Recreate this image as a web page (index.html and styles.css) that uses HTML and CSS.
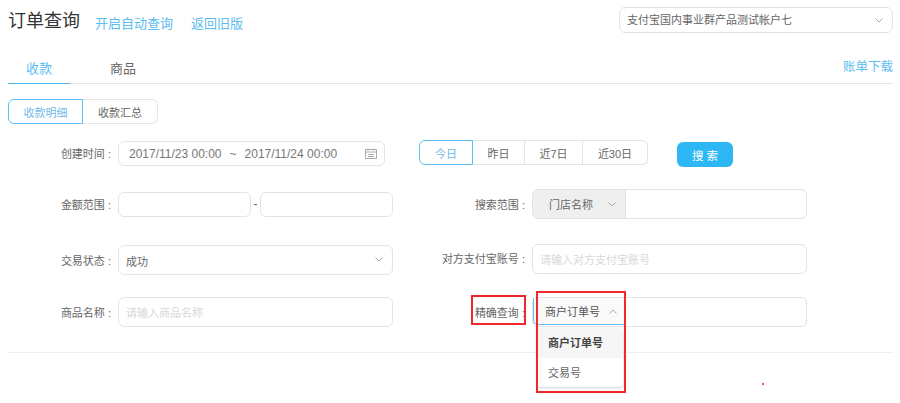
FILE: index.html
```html
<!DOCTYPE html>
<html lang="zh-CN">
<head>
<meta charset="utf-8">
<title>订单查询</title>
<link rel="stylesheet" href="styles.css">
</head>
<body>
<div class="page">
  <header class="head">
    <h1 class="title">订单查询</h1>
    <a class="link first">开启自动查询</a>
    <a class="link second">返回旧版</a>
    <div class="account">
      <span>支付宝国内事业群产品测试帐户七</span>
      <svg class="chev" viewBox="0 0 8 5"><path d="M.5.5L4 4 7.500.5"/></svg>
    </div>
  </header>
  <nav class="tabs">
    <a class="tab active">收款</a>
    <a class="tab">商品</a>
    <a class="download">账单下载</a>
  </nav>
  <div class="seg">
    <a class="seg-item active">收款明细</a>
    <a class="seg-item">收款汇总</a>
  </div>
  <div class="row row1">
    <div class="cell">
      <label class="lab">创建时间 :</label>
      <div class="box date">
        <span class="date-text">2017/11/23 00:00<span class="tilde">~</span>2017/11/24 00:00</span>
        <svg class="cal" viewBox="0 0 12 11"><path d="M.5 1.500h11v9H.5zM.5 4h11M3 .5v2M9 .5v2M3 6.500h6M3 8.500h6"/></svg>
      </div>
    </div>
    <div class="quick">
      <a class="q q-today">今日</a><a class="q q-yes">昨日</a><a class="q q-7">近7日</a><a class="q q-30">近30日</a>
    </div>
    <button class="search">搜 索</button>
  </div>
  <div class="row row2">
    <div class="cell">
      <label class="lab">金额范围 :</label>
      <div class="box half"></div>
      <span class="dash">-</span>
      <div class="box half"></div>
    </div>
    <label class="lab lab-r">搜索范围 :</label>
    <div class="box wide h30">
      <div class="addon">门店名称<svg class="chev" viewBox="0 0 8 5"><path d="M.5.5L4 4 7.500.5"/></svg></div>
    </div>
  </div>
  <div class="row row3">
    <div class="cell">
      <label class="lab">交易状态 :</label>
      <div class="box full status">
        <span class="status-text">成功</span>
        <svg class="chev" viewBox="0 0 8 5"><path d="M.5.5L4 4 7.500.5"/></svg>
      </div>
    </div>
    <label class="lab lab-r raised">对方支付宝账号 :</label>
    <div class="box wide raised h30 ph">请输入对方支付宝账号</div>
  </div>
  <div class="row row4">
    <div class="cell">
      <label class="lab">商品名称 :</label>
      <div class="box full h30 ph">请输入商品名称</div>
    </div>
    <label class="lab lab-r">精确查询 :</label>
    <div class="box wide h30 exact">
      <div class="exact-sel">商户订单号<svg class="chev" viewBox="0 0 8 5"><path d="M.5 4.500L4 1l3.500 3.500"/></svg></div>
      <ul class="menu">
        <li class="menu-item on">商户订单号</li>
        <li class="menu-item">交易号</li>
      </ul>
    </div>
  </div>
  <hr class="rule">
</div>
<i class="mark mark-label"></i>
<i class="mark mark-select"></i>
<i class="dot"></i>
</body>
</html>
```
FILE: styles.css
```css
* { box-sizing: border-box; }
html, body { margin: 0; height: 403px; overflow: hidden; background: #fff; }
body {
  position: relative;
  font-family: "Liberation Sans", "Noto Sans CJK SC", sans-serif;
  font-size: 12px;
  color: #666;
}
a { color: inherit; text-decoration: none; }
.page { padding: 0 7px 0 8px; }

.head { display: flex; align-items: flex-start; height: 40px; padding-top: 7px; }
.title { margin: 1px 15px 0 0; font-size: 18px; font-weight: 400; color: #333; line-height: 26px; }
.link { font-size: 13px; color: #5cbdf2; line-height: 34px; margin-top: 0; }
.second { margin-left: 18px; }
.account {
  margin-left: auto; width: 274px; height: 26px; padding: 0 9px 0 7px;
  border: 1px solid #e3e3e3; border-radius: 6px;
  display: flex; align-items: center; justify-content: space-between;
  font-size: 11px; line-height: 24px;
}
.chev { width: 8px; height: 5px; fill: none; stroke: #aaa; stroke-width: 1; flex: none; }

.tabs { display: flex; height: 44px; border-bottom: 1px solid #e6e6e6; position: relative; }
.tab {
  width: 62px; margin-right: 22px; text-align: center; font-size: 13px; line-height: 18px;
  padding-top: 20px; margin-bottom: -1px; color: #666; border-bottom: 1px solid transparent;
}
.tab.active { color: #5cbdf2; border-bottom-color: #4cb8f2; }
.download { margin-left: auto; font-size: 12.5px; color: #5cbdf2; line-height: 18px; padding-top: 18px; }

.seg { display: flex; margin-top: 15px; height: 25px; }
.seg-item {
  width: 75px; padding-top: 1px; border: 1px solid #e6e6e6; border-left: 0; font-size: 11px; line-height: 24px; text-align: center;
  border-radius: 0 6px 6px 0;
}
.seg-item.active { border: 1px solid #5cc2f7; border-radius: 6px 0 0 6px; color: #6fb9e8; }

.row { display: flex; align-items: center; }
.row1 { margin-top: 16px; align-items: flex-start; height: 27px; }
.row2 { margin-top: 22px; height: 30px; }
.row3 { margin-top: 26px; height: 30px; }
.row4 { margin-top: 22px; height: 30px; }
.cell { width: 400px; flex: none; display: flex; align-items: center; }
.lab { width: 110px; flex: none; padding: 2px 7px 0 0; text-align: right; font-size: 11px; line-height: 25px; white-space: nowrap; }
.lab-r { width: 124px; }
.raised { margin-bottom: 3px; }

.box { border: 1px solid #e3e3e3; border-radius: 6px; background: #fff; height: 25px; flex: none; }
.date { width: 267px; display: flex; align-items: center; padding: 1px 7px 0 10px; justify-content: space-between; }
.date-text { font-size: 12px; color: #777; }
.tilde { margin: 0 8px; }
.cal { width: 12px; height: 11px; margin-top: -2px; fill: none; stroke: #aaa; stroke-width: 1; }
.half { width: 133px; }
.dash { width: 9px; text-align: center; font-size: 12px; line-height: 25px; }
.full { width: 275px; }
.h30 { height: 30px; }
.wide { width: 275px; }
.status { height: 30px; display: flex; align-items: center; justify-content: space-between; padding: 2px 9px 0 7px; font-size: 11px; }
.status .chev { margin-top: -3px; }
.ph { color: #d8d8d8; font-size: 11px; line-height: 30px; padding-left: 7px; }

.quick { display: flex; margin-left: 11px; height: 25px; }
.q { border: 1px solid #e3e3e3; border-left: 0; padding-top: 1px; line-height: 24px; text-align: center; font-size: 11px; }
.q-today { width: 54px; border: 1px solid #5cc2f7; border-radius: 6px 0 0 6px; color: #6fb9e8; }
.q-yes { width: 52px; }
.q-7 { width: 58px; }
.q-30 { width: 65px; border-radius: 0 6px 6px 0; }
.search {
  margin: 2px 0 0 29px; width: 56px; height: 25px; border: 0; border-radius: 6px; padding: 0;
  background: #2eb7f5; color: #fff; font: inherit; font-size: 11.5px;
}

.addon {
  width: 93px; height: 100%; background: #efefef; border-right: 1px solid #e3e3e3; border-radius: 5px 0 0 5px;
  display: flex; align-items: center; padding-left: 16px; font-size: 11px; white-space: nowrap;
}
.addon .chev { margin-left: 15px; }

.exact { position: relative; }
.exact-sel {
  width: 93px; height: 27px; padding-left: 11px; white-space: nowrap;
  display: flex; align-items: center; border-bottom: 1px solid #5cc2f7; border-left: 1px solid #5cc2f7;
  border-radius: 0 0 0 5px; font-size: 11px; color: #555; background: #fafafa;
}
.exact-sel .chev { margin-left: 9px; }
.menu {
  position: absolute; left: 4px; top: 30px; width: 86px; height: 59px; margin: 0; padding: 0;
  list-style: none; background: #fff; border-radius: 4px;
  box-shadow: 0 1px 3px rgba(0,0,0,.18); z-index: 2;
}
.menu-item { height: 29px; padding-left: 11px; line-height: 31px; font-size: 11px; color: #666; }
.menu-item.on { height: 30px; background: #f6f6f6; color: #444; font-weight: 700; border-radius: 4px 4px 0 0; }

.rule { border: 0; height: 1px; background: #f0f0f0; margin: 25px 0 0; }

.mark { position: absolute; border: 2px solid #f0282d; z-index: 3; }
.mark-label { left: 471px; top: 295px; width: 55px; height: 30px; }
.mark-select { left: 536px; top: 291px; width: 90px; height: 102px; }
.dot { position: absolute; left: 762px; top: 383px; width: 2px; height: 2px; background: #f0282d; border-radius: 50%; }
```
